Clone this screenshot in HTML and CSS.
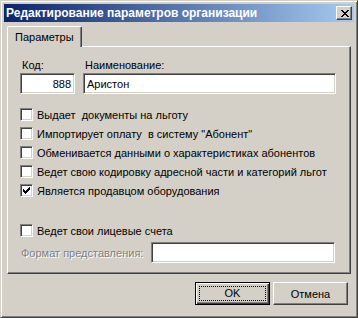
FILE: index.html
```html
<!DOCTYPE html>
<html lang="ru">
<head>
    <meta charset="UTF-8">
    <title>Редактирование параметров организации</title>
    <link rel="stylesheet" href="styles.css">
</head>
<body>
    <div class="window">
        <div class="titlebar">
            <span class="title">Редактирование параметров организации</span>
            <span class="close-btn">
                <svg width="8" height="7" viewBox="0 0 8 7" shape-rendering="crispEdges">
                    <path fill="#000" d="M0 0h2v1h-2z M6 0h2v1h-2z M1 1h2v1h-2z M5 1h2v1h-2z M2 2h4v1h-4z M3 3h2v1h-2z M2 4h4v1h-4z M1 5h2v1h-2z M5 5h2v1h-2z M0 6h2v1h-2z M6 6h2v1h-2z"/>
                </svg>
            </span>
        </div>
        <div class="tabs">
            <div class="tab">Параметры</div>
        </div>
        <div class="panel">
            <div class="fields">
                <div class="field field-code">
                    <label>Код:</label>
                    <div class="edit edit-right">888</div>
                </div>
                <div class="field field-name">
                    <label>Наименование:</label>
                    <div class="edit">Аристон</div>
                </div>
            </div>
            <div class="checks">
                <div class="check"><span class="box"></span>Выдает&nbsp; документы на льготу</div>
                <div class="check"><span class="box"></span>Импортирует оплату&nbsp; в систему "Абонент"</div>
                <div class="check"><span class="box"></span>Обменивается данными о характеристиках абонентов</div>
                <div class="check"><span class="box"></span>Ведет свою кодировку адресной части и категорий льгот</div>
                <div class="check"><span class="box checked">
                    <svg width="7" height="7" viewBox="0 0 7 7" shape-rendering="crispEdges">
                        <path fill="#000" d="M0 2h1v3h-1z M1 3h1v3h-1z M2 4h1v3h-1z M3 3h1v3h-1z M4 2h1v3h-1z M5 1h1v3h-1z M6 0h1v3h-1z"/>
                    </svg>
                </span>Является продавцом оборудования</div>
            </div>
            <div class="check check-accounts"><span class="box"></span>Ведет свои лицевые счета</div>
            <div class="format-row">
                <span class="disabled">Формат представления:</span>
                <div class="edit edit-format"></div>
            </div>
        </div>
        <div class="buttons">
            <button class="btn btn-default"><span class="focus">OK</span></button>
            <button class="btn">Отмена</button>
        </div>
    </div>
</body>
</html>
```

FILE: styles.css
```css
body {
    margin: 0;
    padding: 0;
    background-color: #d4d0c8;
    font-family: "Liberation Sans", Arial, sans-serif;
    font-size: 11px;
    color: #000;
}
.window {
    width: 358px;
    height: 318px;
    box-sizing: border-box;
    background-color: #d4d0c8;
    border: 1px solid;
    border-color: #d4d0c8 #404040 #404040 #d4d0c8;
    box-shadow: inset 1px 1px #fff, inset -1px -1px #808080;
    padding: 3px;
    display: flex;
    flex-direction: column;
}
.titlebar {
    height: 18px;
    background: linear-gradient(to right, #0a246a, #a6caf0);
    display: flex;
    align-items: center;
    justify-content: space-between;
    padding: 0 2px 0 2px;
}
.title {
    color: #fff;
    font-weight: bold;
    font-size: 12px;
}
.close-btn {
    width: 16px;
    height: 14px;
    box-sizing: border-box;
    background-color: #d4d0c8;
    border: 1px solid;
    border-color: #fff #404040 #404040 #fff;
    box-shadow: inset -1px -1px #808080;
    display: flex;
    align-items: center;
    justify-content: center;
    padding-left: 1px;
}
.close-btn svg {
    display: block;
}
.tabs {
    display: flex;
    margin: 4px 0 0 3px;
    position: relative;
    z-index: 1;
}
.tab {
    height: 21px;
    box-sizing: border-box;
    width: 75px;
    padding: 4px 0 0 7px;
    border-top: 1px solid #fff;
    border-left: 1px solid #fff;
    border-right: 1px solid #404040;
    box-shadow: inset -1px 0 #808080;
    border-radius: 2px 2px 0 0;
    background-color: #d4d0c8;
    margin-bottom: -1px;
}
.panel {
    margin-left: 3px;
    width: 344px;
    height: 228px;
    box-sizing: border-box;
    border: 1px solid;
    border-color: #fff #404040 #404040 #fff;
    box-shadow: inset -1px -1px #808080;
    padding: 12px 0 0 12px;
}
.fields {
    display: flex;
    gap: 8px;
}
.field {
    display: flex;
    flex-direction: column;
}
.field label {
    height: 13px;
    margin: 0 0 1px 2px;
}
.field-code {
    width: 55px;
}
.field-name {
    width: 253px;
}
.edit {
    height: 21px;
    box-sizing: border-box;
    background-color: #fff;
    border: 1px solid;
    border-color: #808080 #fff #fff #808080;
    box-shadow: inset 1px 1px #404040, inset -1px -1px #d4d0c8;
    padding: 4px 3px 0 3px;
}
.edit-right {
    text-align: right;
}
.checks {
    margin-top: 11px;
}
.check {
    display: flex;
    align-items: center;
    height: 19px;
}
.box {
    width: 13px;
    height: 13px;
    box-sizing: border-box;
    background-color: #fff;
    border: 1px solid;
    border-color: #808080 #fff #fff #808080;
    box-shadow: inset 1px 1px #404040, inset -1px -1px #d4d0c8;
    margin-right: 4px;
    flex-shrink: 0;
    display: flex;
    align-items: center;
    justify-content: center;
}
.box svg {
    display: block;
}
.check-accounts {
    margin-top: 21px;
}
.format-row {
    display: flex;
    align-items: center;
    margin-top: 2px;
    gap: 8px;
}
.disabled {
    color: #808080;
    text-shadow: 1px 1px 0 #fff;
    margin-left: 1px;
}
.edit-format {
    width: 184px;
}
.buttons {
    display: flex;
    justify-content: flex-end;
    gap: 3px;
    margin: 8px 6px 0 0;
}
.btn {
    width: 75px;
    height: 23px;
    box-sizing: border-box;
    background-color: #d4d0c8;
    font-family: "Liberation Sans", Arial, sans-serif;
    font-size: 11px;
    color: #000;
    border: 1px solid;
    border-color: #fff #404040 #404040 #fff;
    box-shadow: inset -1px -1px #808080;
    padding: 0;
}
.btn-default {
    border: 1px solid #000;
    box-shadow: inset 1px 1px #fff, inset -1px -1px #404040, inset -2px -2px #808080;
    padding: 3px;
}
.focus {
    display: block;
    height: 100%;
    box-sizing: border-box;
    border: 1px dotted #000;
    line-height: 13px;
}
```
